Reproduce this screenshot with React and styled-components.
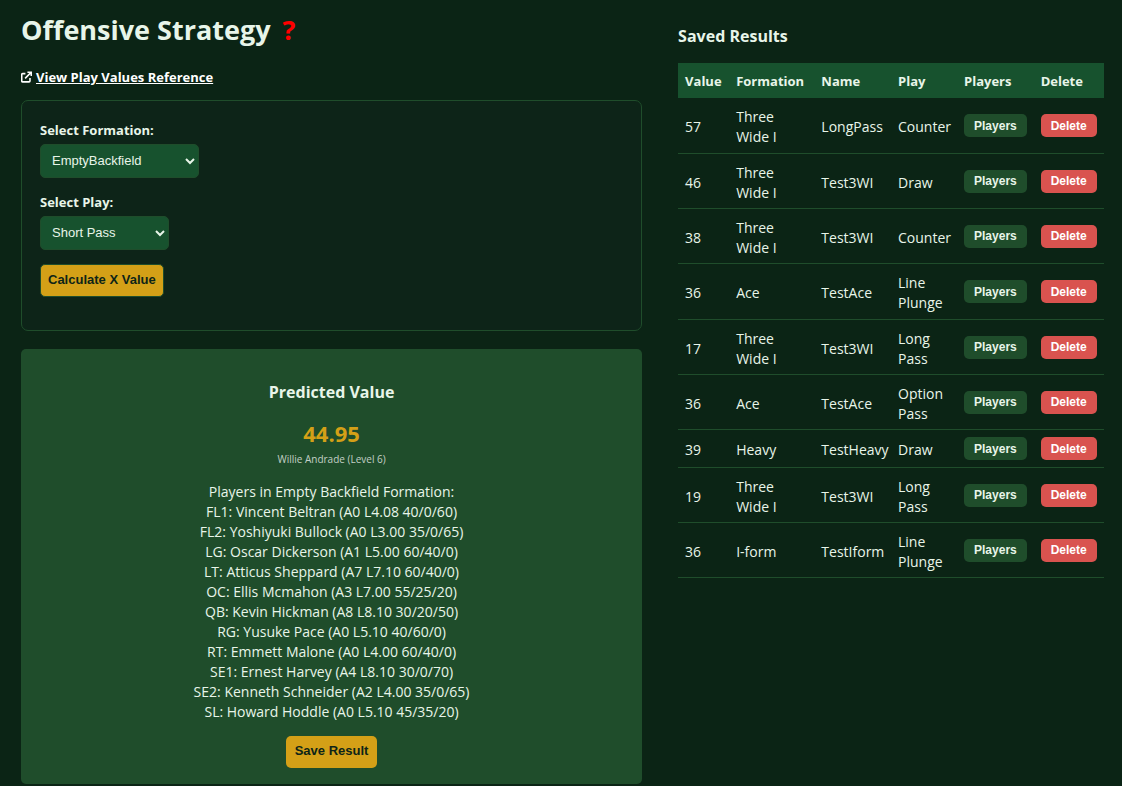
import React from "react";
import styled, { createGlobalStyle } from "styled-components";

const GlobalStyle = createGlobalStyle`
  * { box-sizing: border-box; }
  body {
    margin: 0;
    background: #0b2415;
    color: #e8f5e9;
    font-family: "Segoe UI", "Open Sans", "Noto Sans", sans-serif;
    font-size: 14px;
    line-height: 20px;
  }
`;

const Page = styled.main`
  display: grid;
  grid-template-columns: 35fr 24fr;
  align-items: start;
  gap: 36px;
  padding: 0 18px 0 21px;
`;

const Column = styled.section`
  min-width: 0;
`;

const Title = styled.h1`
  display: flex;
  gap: 12px;
  margin: 12px 0 19px;
  font-size: 27px;
  line-height: 36px;
  font-weight: 700;
`;

const HelpButton = styled.button`
  padding: 0;
  border: 0;
  background: none;
  color: #ff0000;
  font: inherit;
  cursor: pointer;
`;

const ReferenceLink = styled.a`
  display: flex;
  align-items: center;
  gap: 4px;
  width: fit-content;
  margin-bottom: 13px;
  color: #ffffff;
  font-size: 13px;
  font-weight: 700;
  line-height: 20px;
`;

const Panel = styled.form`
  display: flex;
  flex-direction: column;
  align-items: flex-start;
  padding: 19px 18px 33px;
  margin-bottom: 18px;
  border: 1px solid #1f4d2b;
  border-radius: 7px;
  background: #0d2418;
`;

const Label = styled.label`
  margin-bottom: 4px;
  font-size: 13px;
  font-weight: 700;
`;

const Select = styled.select`
  width: ${(p) => p.$width}px;
  height: 34px;
  margin-bottom: 14px;
  padding: 0 0 2px 7px;
  border: 1px solid #1f4d2b;
  border-radius: 5px;
  background: #17522e;
  color: #e8f5e9;
  font: 13px/20px "Liberation Sans", sans-serif;
`;

const GoldButton = styled.button`
  height: ${(p) => (p.$outlined ? 33 : 32)}px;
  padding: 0 ${(p) => (p.$outlined ? 7 : 9)}px 2px;
  border: ${(p) => (p.$outlined ? "1px solid #1f4d2b" : "0")};
  border-radius: 5px;
  background: #d4a017;
  color: #0d2418;
  font: 700 13px/20px "Liberation Sans", sans-serif;
  cursor: pointer;
`;

const Prediction = styled.section`
  padding: 32px 18px 16px;
  border-radius: 5px;
  background: #1f4d2b;
  text-align: center;
`;

const Heading = styled.h2`
  margin: 0;
  font-size: 16px;
  line-height: 22px;
  font-weight: 700;
`;

const Score = styled.p`
  margin: 15px 0 0;
  color: #d4a017;
  font-size: 22px;
  line-height: 30px;
  font-weight: 700;
`;

const Caption = styled.p`
  margin: 3px 0 15px;
  color: #c3d0c6;
  font-size: 10px;
  line-height: 16px;
`;

const Roster = styled.ul`
  margin: 0 0 14px;
  padding: 0;
  list-style: none;
`;

const SavedHeading = styled(Heading)`
  margin: 25px 0 16px;
`;

const Table = styled.table`
  width: 100%;
  table-layout: fixed;
  border-collapse: separate;
  border-spacing: 0;
`;

const HeadCell = styled.th`
  width: ${(p) => p.$width}%;
  padding: 8px 7px 7px;
  background: #17522e;
  text-align: left;
  font-size: 13px;
  font-weight: 700;
`;

const Cell = styled.td`
  padding: 7px;
  border-bottom: 1px solid #1f4d2b;
  vertical-align: middle;
`;

const TextCell = styled(Cell)`
  padding: 9px 7px 5px;
`;

const Row = styled.tr`
  &:nth-child(3n + 1) > ${TextCell} {
    padding-bottom: 6px;
  }
`;

const SmallButton = styled.button`
  display: block;
  height: 23px;
  padding: 0 10px;
  border: 0;
  border-radius: 5px;
  background: ${(p) => (p.$danger ? "#d9534f" : "#1f4d2b")};
  color: ${(p) => (p.$danger ? "#ffffff" : "#e8f5e9")};
  font: 700 12px/20px "Liberation Sans", sans-serif;
  cursor: pointer;
`;

const columns = [
  ["Value", 12],
  ["Formation", 20],
  ["Name", 18],
  ["Play", 15.5],
  ["Players", 18],
  ["Delete", 16.5],
];

const results = [
  [57, "Three Wide I", "LongPass", "Counter"],
  [46, "Three Wide I", "Test3WI", "Draw"],
  [38, "Three Wide I", "Test3WI", "Counter"],
  [36, "Ace", "TestAce", "Line Plunge"],
  [17, "Three Wide I", "Test3WI", "Long Pass"],
  [36, "Ace", "TestAce", "Option Pass"],
  [39, "Heavy", "TestHeavy", "Draw"],
  [19, "Three Wide I", "Test3WI", "Long Pass"],
  [36, "I-form", "TestIform", "Line Plunge"],
];

const players = [
  "FL1: Vincent Beltran (A0 L4.08 40/0/60)",
  "FL2: Yoshiyuki Bullock (A0 L3.00 35/0/65)",
  "LG: Oscar Dickerson (A1 L5.00 60/40/0)",
  "LT: Atticus Sheppard (A7 L7.10 60/40/0)",
  "OC: Ellis Mcmahon (A3 L7.00 55/25/20)",
  "QB: Kevin Hickman (A8 L8.10 30/20/50)",
  "RG: Yusuke Pace (A0 L5.10 40/60/0)",
  "RT: Emmett Malone (A0 L4.00 60/40/0)",
  "SE1: Ernest Harvey (A4 L8.10 30/0/70)",
  "SE2: Kenneth Schneider (A2 L4.00 35/0/65)",
  "SL: Howard Hoddle (A0 L5.10 45/35/20)",
];

function ExternalIcon() {
  return (
    <svg width="11" height="12" viewBox="0 0 12 12" fill="none" stroke="#fff" strokeWidth="1.7" aria-hidden="true">
      <path d="M4.8 2.3H1.8q-1 0-1 1v7q0 1 1 1h7q1 0 1-1V7.2" />
      <path d="M7 .8h4.2V5M11 1L4.5 7.5" />
    </svg>
  );
}

export default function App() {
  return (
    <>
      <GlobalStyle />
      <Page>
        <Column>
          <Title>
            Offensive Strategy
            <HelpButton type="button">?</HelpButton>
          </Title>
          <ReferenceLink href="#reference">
            <ExternalIcon />
            View Play Values Reference
          </ReferenceLink>
          <Panel onSubmit={(e) => e.preventDefault()}>
            <Label htmlFor="formation">Select Formation:</Label>
            <Select id="formation" $width={159} defaultValue="EmptyBackfield">
              <option>EmptyBackfield</option>
              <option>ThreeWideI</option>
              <option>Ace</option>
            </Select>
            <Label htmlFor="play">Select Play:</Label>
            <Select id="play" $width={129} defaultValue="Short Pass">
              <option>Short Pass</option>
              <option>Long Pass</option>
              <option>Draw</option>
            </Select>
            <GoldButton $outlined>Calculate X Value</GoldButton>
          </Panel>
          <Prediction>
            <Heading>Predicted Value</Heading>
            <Score>44.95</Score>
            <Caption>Willie Andrade (Level 6)</Caption>
            <div>Players in Empty Backfield Formation:</div>
            <Roster>
              {players.map((p) => (
                <li key={p}>{p}</li>
              ))}
            </Roster>
            <GoldButton type="button">Save Result</GoldButton>
          </Prediction>
        </Column>
        <Column>
          <SavedHeading>Saved Results</SavedHeading>
          <Table>
            <thead>
              <tr>
                {columns.map(([name, width]) => (
                  <HeadCell key={name} $width={width}>{name}</HeadCell>
                ))}
              </tr>
            </thead>
            <tbody>
              {results.map((r, i) => (
                <Row key={i}>
                  {r.map((v, j) => (
                    <TextCell key={j}>{v}</TextCell>
                  ))}
                  <Cell><SmallButton type="button">Players</SmallButton></Cell>
                  <Cell><SmallButton type="button" $danger>Delete</SmallButton></Cell>
                </Row>
              ))}
            </tbody>
          </Table>
        </Column>
      </Page>
    </>
  );
}
